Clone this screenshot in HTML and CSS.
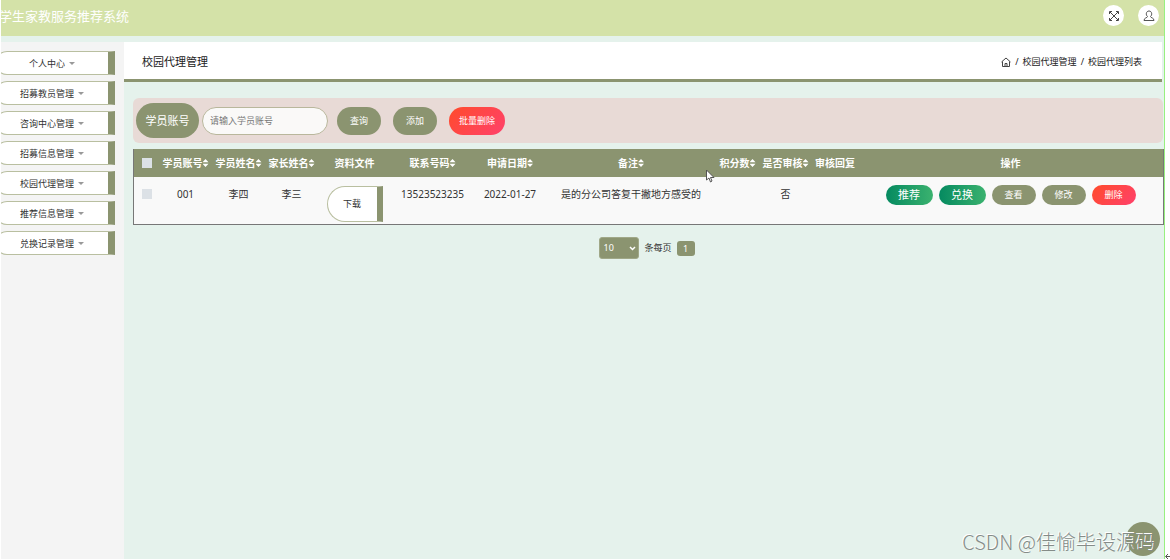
FILE: index.html
```html
<!DOCTYPE html>
<html lang="zh-CN">
<head>
<meta charset="utf-8">
<title>学生家教服务推荐系统</title>
<link rel="stylesheet" href="styles.css">
</head>
<body>
<div class="app">
  <header class="topbar">
    <div class="brand"><span>大学生家教服务推荐系统</span></div>
    <div class="tools">
      <button class="round" type="button" aria-label="全屏">
        <svg width="12" height="12" viewBox="0 0 12 12" fill="none" stroke="#444"><path d="M2 2l8 8M10 2l-8 8"/><path d="M1.500 4V1.500H4M8 1.500h2.500V4M10.500 8v2.500H8M4 10.500H1.500V8"/></svg>
      </button>
      <button class="round" type="button" aria-label="用户">
        <svg width="12" height="12" viewBox="0 0 12 12" fill="none" stroke="#555"><path d="M4.500 6.500C2.500 5 3 1 6 1s3.500 4 1.500 5.500c0 1.500 3.500 1 3.500 4H1c0-3 3.500-2.500 3.500-4z"/></svg>
      </button>
    </div>
  </header>
  <div class="body">
    <nav class="sidebar">
      <button class="menu" type="button">个人中心<i class="caret"></i></button>
      <button class="menu" type="button">招募教员管理<i class="caret"></i></button>
      <button class="menu" type="button">咨询中心管理<i class="caret"></i></button>
      <button class="menu" type="button">招募信息管理<i class="caret"></i></button>
      <button class="menu" type="button">校园代理管理<i class="caret"></i></button>
      <button class="menu" type="button">推荐信息管理<i class="caret"></i></button>
      <button class="menu" type="button">兑换记录管理<i class="caret"></i></button>
    </nav>
    <main class="main">
      <div class="titlebar">
        <h1>校园代理管理</h1>
        <div class="crumbs">
          <a href="#" aria-label="首页"><svg width="10" height="10" viewBox="0 0 10 10" fill="none" stroke="#444"><path d="M.500 5L5 1l4.500 4M1.500 4.500v5h7v-5M4 9.500V6.500h2v3"/></svg></a>
          <span>/</span><a href="#">校园代理管理</a><span>/</span><span>校园代理列表</span>
        </div>
      </div>
      <form class="search">
        <label class="tag" for="account">学员账号</label>
        <input class="field" id="account" type="text" placeholder="请输入学员账号">
        <button class="btn" type="button">查询</button>
        <button class="btn" type="button">添加</button>
        <button class="btn danger" type="button">批量删除</button>
      </form>
      <table class="grid">
        <colgroup><col class="c25"><col class="c53"><col class="c53"><col class="c53"><col class="c73"><col class="c83"><col class="c72"><col class="c170"><col class="c43"><col class="c53"><col class="c46"><col></colgroup>
        <thead>
          <tr>
            <th><input type="checkbox" aria-label="全选"></th>
            <th>学员账号<i class="sort"></i></th>
            <th>学员姓名<i class="sort"></i></th>
            <th>家长姓名<i class="sort"></i></th>
            <th>资料文件</th>
            <th>联系号码<i class="sort"></i></th>
            <th>申请日期<i class="sort"></i></th>
            <th>备注<i class="sort"></i></th>
            <th>积分数<i class="sort"></i></th>
            <th>是否审核<i class="sort"></i></th>
            <th>审核回复</th>
            <th>操作</th>
          </tr>
        </thead>
        <tbody>
          <tr>
            <td><input type="checkbox" aria-label="选择"></td>
            <td>001</td>
            <td>李四</td>
            <td>李三</td>
            <td><button class="download" type="button">下载</button></td>
            <td>13523523235</td>
            <td>2022-01-27</td>
            <td>是的分公司答复干撇地方感受的</td>
            <td></td>
            <td>否</td>
            <td></td>
            <td class="ops">
              <div class="actions">
                <button class="act green" type="button">推荐</button>
                <button class="act green" type="button">兑换</button>
                <button class="act" type="button">查看</button>
                <button class="act" type="button">修改</button>
                <button class="act danger" type="button">删除</button>
              </div>
            </td>
          </tr>
        </tbody>
      </table>
      <div class="pager">
        <div class="select">
          <select id="size"><option>10</option></select>
          <svg width="7" height="5" viewBox="0 0 7 5" fill="none" stroke="#fff" stroke-width="1.500"><path d="M1 1l2.500 2.500L6 1"/></svg>
        </div>
        <label for="size">条每页</label>
        <button class="page" type="button">1</button>
      </div>
    </main>
  </div>
</div>
<button class="fab" type="button" aria-label="回到顶部"></button>
<div class="watermark">CSDN @佳愉毕设源码</div>
<svg class="mark" width="5" height="7" viewBox="0 0 5 7" fill="none" stroke="#555"><path d="M5 3.500H1M3 1L.500 3.500 3 6"/></svg>
<svg class="cursor" width="9" height="14" viewBox="0 0 9 14" fill="#fff" stroke="#555"><path d="M.500 1v10l2.500-2 1.500 4 1.500-1-1.500-3.500H8z"/></svg>
</body>
</html>
```
FILE: styles.css
```css
* { box-sizing: border-box; }
body {
  margin: 0;
  height: 100vh;
  padding: 0 5px 1px 1px;
  background: #fff;
  color: #333;
  font: 10px/16px "Noto Sans", "Noto Sans CJK SC", sans-serif;
  overflow: hidden;
}
button, input, select { font: inherit; color: inherit; }
button { border: 0; padding: 0; white-space: nowrap; }
a { color: inherit; text-decoration: none; }
svg { display: block; }

.app {
  height: 100%;
  display: flex;
  flex-direction: column;
  background: #e5f2ec;
  border-right: 1px solid #98f080;
}
.topbar {
  display: flex;
  justify-content: space-between;
  height: 36px;
  background: #d4e2a8;
}
.brand {
  display: flex;
  justify-content: flex-end;
  width: 128px;
  overflow: hidden;
  color: #fff;
  font-size: 13px;
  line-height: 32px;
  white-space: nowrap;
}
.tools { display: flex; gap: 14px; padding: 5px 5px 0 0; }
.round {
  display: flex;
  align-items: center;
  justify-content: center;
  width: 21px;
  height: 21px;
  border-radius: 50%;
  background: #fff;
}
.body { flex: 1; display: flex; margin-top: 6px; }
.sidebar {
  flex: none;
  display: flex;
  flex-direction: column;
  gap: 6px;
  width: 123px;
  padding: 9px 9px 0 0;
  background: #f4f4f4;
  overflow: hidden;
}
.menu {
  display: flex;
  align-items: center;
  justify-content: center;
  gap: 4px;
  height: 24px;
  margin-left: -6px;
  padding-top: 1px;
  border: 1px solid #b9bfa0;
  border-right: 7px solid #8b9470;
  border-radius: 12px 0 0 12px;
  background: #fff;
  font-size: 9px;
}
.caret {
  border: 3px solid transparent;
  border-top-color: #999;
  border-bottom: 0;
}
.main { flex: 1; min-width: 0; }
.titlebar {
  display: flex;
  align-items: center;
  justify-content: space-between;
  height: 40px;
  margin-right: 2px;
  padding: 3px 20px 0 18px;
  background: #fff;
  border-bottom: 3px solid #8b9470;
}
h1 { margin: 0; font-size: 11px; font-weight: 400; color: #222; }
.crumbs { display: flex; align-items: center; gap: 4px; font-size: 9px; color: #222; }
.search {
  display: flex;
  align-items: center;
  height: 45px;
  margin: 16px 1px 6px 9px;
  padding-left: 3px;
  border-radius: 6px;
  background: #e8dad6;
}
.tag {
  width: 63px;
  border-radius: 18px;
  background: #8b9470;
  color: #fff;
  font-size: 11px;
  line-height: 35px;
  text-align: center;
}
.field {
  width: 126px;
  height: 28px;
  margin: 0 9px 0 3px;
  padding: 0 7px;
  border: 1px solid #b9b79c;
  border-radius: 14px;
  background: #faf9f8;
  font-size: 9px;
}
.field::placeholder { color: #777; }
.btn {
  height: 28px;
  margin-right: 12px;
  padding: 0 13px;
  border-radius: 14px;
  background: #8b9470;
  color: #fff;
  font-size: 9px;
}
.btn.danger { padding: 0 10px; }
.btn.danger, .act.danger { background: linear-gradient(135deg, #ff4b2b, #ff416c); }
.grid {
  width: calc(100% - 9px);
  margin-left: 9px;
  table-layout: fixed;
  border-collapse: separate;
  border-spacing: 0;
  border: 1px solid #777;
  border-top: 0;
  background: #f9f9f9;
}
.c25 { width: 25px; }
.c43 { width: 43px; }
.c46 { width: 46px; }
.c53 { width: 53px; }
.c72 { width: 72px; }
.c73 { width: 73px; }
.c83 { width: 83px; }
.c170 { width: 170px; }
th, td { padding: 0; text-align: center; white-space: nowrap; }
th { height: 28px; background: #8b9470; color: #fff; }
td { height: 47px; padding-top: 9px; vertical-align: top; }
td.ops { padding-top: 8px; }
.grid input {
  appearance: none;
  display: block;
  width: 10px;
  height: 10px;
  margin: 0 auto;
  background: #dce1e6;
}
.grid td input { margin-top: 3px; }
.sort {
  display: inline-block;
  width: 6px;
  height: 8px;
  background: #fff;
  clip-path: polygon(50% 0, 100% 42%, 0 42%, 0 58%, 100% 58%, 50% 100%, 0 58%, 0 42%);
}
.download {
  width: 56px;
  height: 36px;
  border: 1px solid #b9bfa0;
  border-right: 6px solid #8b9470;
  border-radius: 18px 0 0 18px;
  background: #fff;
  font-size: 9px;
}
.actions { display: flex; justify-content: center; gap: 6px; }
.act {
  width: 44px;
  height: 20px;
  border-radius: 10px;
  background: #8b9470;
  color: #fff;
  font-size: 9px;
}
.act.green {
  width: 47px;
  background: linear-gradient(90deg, #058a60, #3bb26f);
  font-size: 11px;
}
.pager {
  display: flex;
  align-items: center;
  justify-content: center;
  gap: 5px;
  margin-top: 12px;
  padding-left: 6px;
  font-size: 9px;
}
.select { display: grid; align-items: center; }
.select select, .select svg { grid-area: 1 / 1; }
.select svg { justify-self: end; margin-right: 3px; pointer-events: none; }
.select select {
  appearance: none;
  width: 40px;
  height: 22px;
  padding: 0 3px;
  border: 1px solid #a0a888;
  border-radius: 3px;
  background: #8b9470;
  color: #fff;
}
.page {
  width: 18px;
  height: 15px;
  border-radius: 3px;
  background: #8b9470;
  color: #fff;
  line-height: 15px;
}
.fab {
  position: absolute;
  right: 10px;
  bottom: 4px;
  width: 34px;
  height: 34px;
  border-radius: 50%;
  background: #8b9470;
}
.watermark {
  position: absolute;
  right: 14px;
  bottom: 4px;
  color: #858c88;
  font: 300 20px/28px "Noto Sans CJK SC", sans-serif;
  text-shadow: -1px -1px 0 #fff;
}
.mark { position: absolute; right: 0; bottom: 0; }
.cursor { position: absolute; left: 706px; top: 169px; }
```
